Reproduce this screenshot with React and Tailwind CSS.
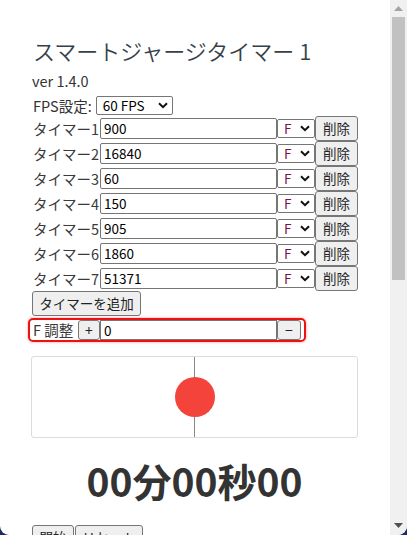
import React from "react";

const timers = ["900", "16840", "60", "150", "905", "1860", "51371"];
const font = { fontFamily: '"Noto Sans CJK JP", "Noto Sans", sans-serif' };

function Chevron() {
  return (
    <svg width="10" height="7" viewBox="0 0 10 7" className="shrink-0">
      <path d="M1 1.2 L5 5.2 L9 1.2" fill="none" stroke="#111" strokeWidth="2" />
    </svg>
  );
}

function Select({ label, className, textClass }) {
  return (
    <div className={"flex items-center justify-between bg-white border border-[#767676] rounded-[2px] pl-[6px] pr-[4px] " + className}>
      <span className={"text-[13.5px] leading-none " + textClass}>{label}</span>
      <Chevron />
    </div>
  );
}

function Btn({ children, className = "" }) {
  return (
    <div className={"flex items-center justify-center bg-[#efefef] border border-[#767676] rounded-[3px] text-[13.5px] text-[#222] " + className}>
      {children}
    </div>
  );
}

export default function App() {
  return (
    <div className="w-[407px] h-[535px] bg-[#1c2b63] overflow-hidden" style={font}>
      <div className="w-full h-full bg-white rounded-b-[9px] overflow-hidden flex">
        <div className="flex-1 pt-[37px] pl-[31px] text-[#333]">
          <div className="pl-[2px] text-[22px] leading-[26px] font-[350] text-[#363f4a]">スマートジャージタイマー 1</div>
          <div className="pl-[1px] mt-[8px] text-[14.5px] leading-[20px]">ver 1.4.0</div>
          <div className="pl-[2px] mt-[4px] flex items-center h-[21px] text-[14.5px]">
            <span>FPS設定:</span>
            <Select label="60 FPS" className="ml-[4px] w-[77px] h-[19px]" textClass="text-black" />
          </div>
          <div className="flex flex-col">
            {timers.map((v, i) => (
              <div key={i} className="flex items-center h-[25px] pl-[2px]">
                <span className="w-[67px] text-[14.5px] text-[#3a3a3a] whitespace-nowrap">タイマー{i + 1}</span>
                <div className="w-[177px] h-[21px] border border-[#767676] rounded-[2px] flex items-center pl-[3px] text-[13.5px] text-black">{v}</div>
                <Select label="F" className="w-[38px] h-[19px]" textClass="text-[#7a1050]" />
                <Btn className="w-[43px] h-[25px]">削除</Btn>
              </div>
            ))}
          </div>
          <Btn className="ml-[1px] w-[109px] h-[25px]">タイマーを追加</Btn>
          <div className="-ml-[3px] mt-[2px] w-[278px] h-[24px] border-2 border-[#ee1111] rounded-[5px] shadow-[0_0_3px_rgba(255,0,0,0.4)] flex items-center pl-[3px] pr-[2px]">
            <span className="w-[45px] text-[14.5px] text-[#3a3a3a] whitespace-nowrap">F 調整</span>
            <Btn className="w-[22px] h-[20px] rounded-[2px] text-[14px]">+</Btn>
            <div className="w-[177px] h-[20px] border border-[#767676] flex items-center pl-[3px] text-[13.5px] text-black">0</div>
            <Btn className="w-[24px] h-[20px] rounded-[2px] text-[14px]">−</Btn>
          </div>
          <div className="mt-[14px] w-[327px] h-[82px] border border-[#dcdcdc] rounded-[3px] relative flex justify-center">
            <div className="w-px h-full bg-[#8a8a8a]" />
            <div className="absolute left-[143px] top-[20px] w-[40px] h-[40px] rounded-full bg-[#f4433a]" />
          </div>
          <div className="w-[327px] mt-[15px] text-center text-[39px] leading-[54px] font-bold text-[#333]">00分00秒00</div>
          <div className="mt-[18px] flex ml-[1px]">
            <Btn className="w-[42px] h-[25px]">開始</Btn>
            <Btn className="ml-[1px] w-[68px] h-[25px] text-[#7a1050]">リセット</Btn>
          </div>
        </div>
        <div className="w-[17px] h-full bg-[#f0f0f0] flex flex-col items-center">
          <div className="h-[17px] flex items-center justify-center">
            <svg width="9" height="5" viewBox="0 0 9 5"><path d="M0 5 L4.5 0 L9 5 Z" fill="#a3a3a3" /></svg>
          </div>
          <div className="w-[13px] h-[263px] bg-[#c1c1c1]" />
          <div className="flex-1" />
          <div className="h-[17px] flex items-center justify-center mb-[1px]">
            <svg width="9" height="5" viewBox="0 0 9 5"><path d="M0 0 L9 0 L4.5 5 Z" fill="#505050" /></svg>
          </div>
        </div>
      </div>
    </div>
  );
}
